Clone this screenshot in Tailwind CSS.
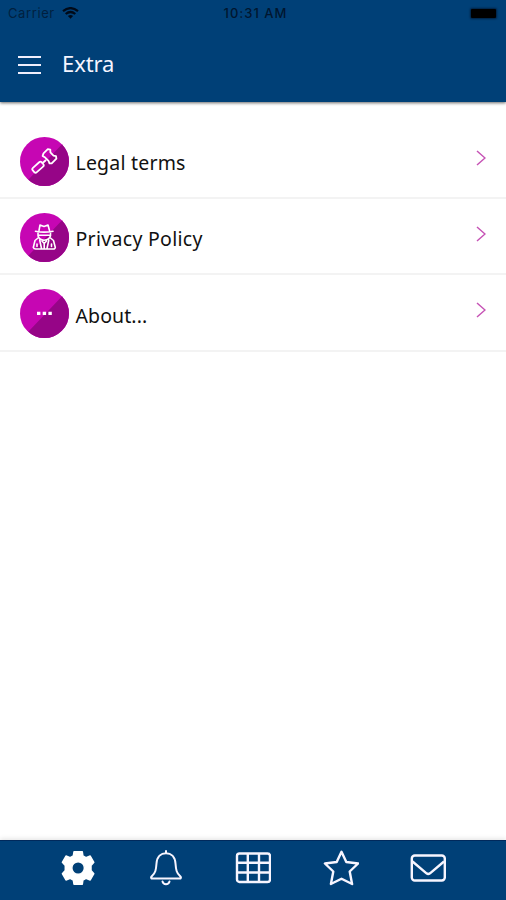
<!DOCTYPE html>
<html lang="en">
<head>
<meta charset="utf-8">
<title>Extra</title>
<script src="https://cdn.jsdelivr.net/npm/@tailwindcss/browser@4"></script>
</head>
<body class="bg-white">
<div class="w-[506px] h-[900px] flex flex-col overflow-hidden bg-white font-['Noto_Sans',sans-serif]">
  <header class="h-[102px] shrink-0 bg-[#004077] shadow-[0_1px_3px_rgba(0,0,0,0.6)]">
    <div class="h-[26px] grid grid-cols-3 items-center pl-2 pr-2.5 text-[13px] leading-[26px] font-['Inter',sans-serif]">
      <div class="flex items-center gap-[7px] text-[#00203f]">
        <span class="tracking-[0.6px]">Carrier</span>
        <svg class="w-[17px] h-3" viewBox="0 0 17 12" fill="none" stroke="#000a18" stroke-width="2.2"><path d="M1 4.2Q8.500-2 16 4.200M3.700 7Q8.500 3 13.300 7"/><path d="M8.500 11.800L5.900 9.100Q8.500 7.100 11.100 9.100Z" fill="#000a18" stroke="none"/></svg>
      </div>
      <div class="text-center text-[#00162f] font-medium tracking-[1px] pl-[7px] whitespace-nowrap">10:31 AM</div>
      <div class="justify-self-end w-[25px] h-[9px] bg-black rounded-[1px] shadow-[0_0_2px_1px_rgba(0,10,30,0.6)]"></div>
    </div>
    <div class="h-[76px] flex items-center pl-[18px] gap-[21px]">
      <svg class="w-[23px] h-[18px] mt-px" viewBox="0 0 23 18" stroke="#f0eefc" stroke-width="2"><path d="M0 1H23M0 9H23M0 17H23"/></svg>
      <h1 class="text-[22px] leading-[30px] text-[#f6f5ff] -mt-0.5 tracking-[-0.1px]">Extra</h1>
    </div>
  </header>
  <main class="flex-1 pt-[21px]">
    <ul class="text-[19.5px] text-[#111]">
      <li class="h-[76px] border-b-2 border-[#f3f3f3] flex items-center pl-5 pr-[20px]">
        <svg class="w-[49px] h-[49px] mt-0.5" viewBox="0 0 49 49"><defs><clipPath id="disc"><circle cx="24.500" cy="24.500" r="24.500"/></clipPath></defs><g clip-path="url(#disc)"><path d="M0 0H49V49H0Z" fill="#c606b3"/><path d="M49 0V49H0V49L9 42Z" fill="#960587"/></g>
          <g fill="none" stroke="#fff" stroke-width="1.800" stroke-linejoin="round" stroke-linecap="round"><rect x="-6" y="-2.900" width="12" height="5.800" rx="1.800" transform="translate(18 30.200) rotate(-42)"/><path d="M22.600 26L25.500 23.500M22.600 19L23.500 16.400L27.800 12.200L30.300 12.600L30.400 15.400L33.500 18.600L36 19.100L36.400 21.600L31.700 26.300L29.500 26.400L28.500 23.800L25.200 20.600Z"/></g></svg>
        <span class="flex-1 pl-[6.500px] pt-1.5 tracking-[0.2px]">Legal terms</span>
        <svg class="w-[10px] h-4 -mt-1" viewBox="0 0 10 16" fill="none" stroke="#c653b5" stroke-width="1.500"><path d="M1 1L9 8L1 15"/></svg>
      </li>
      <li class="h-[76px] border-b-2 border-[#f3f3f3] flex items-center pl-5 pr-[20px]">
        <svg class="w-[49px] h-[49px] mt-0.5" viewBox="0 0 49 49"><g clip-path="url(#disc)"><path d="M0 0H49V49H0Z" fill="#c606b3"/><path d="M49 0V49H0V49L9 42Z" fill="#960587"/></g>
          <g fill="none" stroke="#fff" stroke-width="1.600" stroke-linejoin="round" stroke-linecap="round"><path d="M19 17.500L20 12L24 13.500L28 12L29.500 17.500M15.500 18.200Q24 20 33 18.200M18 19V22.700Q19 26.800 24 27.200Q29.500 26.800 30.500 22.700V19M18.500 22.200H30M18 25L15 27.500L13.300 34.500Q14 36.200 16 36H32.500Q35.200 36.200 35.300 34.500L33.500 27.500L30.500 25M19.700 27L21.500 35.500M28.800 27L27 35.500M22 28L24.200 30.500L26.500 28M24.200 30.500V35.500M17 31V33.500M31.500 31V33.500"/></g></svg>
        <span class="flex-1 pl-[6.500px] pt-1.5 tracking-[0.3px]">Privacy Policy</span>
        <svg class="w-[10px] h-4 -mt-1" viewBox="0 0 10 16" fill="none" stroke="#c653b5" stroke-width="1.500"><path d="M1 1L9 8L1 15"/></svg>
      </li>
      <li class="h-[77px] border-b-2 border-[#f3f3f3] flex items-center pl-5 pr-[20px]">
        <svg class="w-[49px] h-[49px] mt-0.5" viewBox="0 0 49 49"><g clip-path="url(#disc)"><path d="M0 0H49V49H0Z" fill="#c606b3"/><path d="M49 0V49H0V49L9 42Z" fill="#960587"/></g><path fill="#fff" d="M17 22.700h3.400v3.400H17zM22.700 22.700h3.400v3.400h-3.400zM28.400 22.700h3.400v3.400h-3.400z"/></svg>
        <span class="flex-1 pl-[6.500px] pt-1.5 tracking-[0.1px]">About...</span>
        <svg class="w-[10px] h-4 -mt-1.5" viewBox="0 0 10 16" fill="none" stroke="#c653b5" stroke-width="1.500"><path d="M1 1L9 8L1 15"/></svg>
      </li>
    </ul>
  </main>
  <nav class="h-[60px] shrink-0 bg-[#004077] border-t border-[#00295c] shadow-[0_-1px_5px_rgba(0,0,0,0.12)] flex justify-between pl-[60px] pr-[60px] pt-[9px] text-[#f7f5ff]">
    <svg class="w-9 h-9" viewBox="0 0 36 36"><path fill="#fff" fill-rule="evenodd" stroke="#fff" stroke-width="1.500" stroke-linejoin="round" d="M14 1.800H22.300L22.900 6L26 7.600L30.200 6L33.800 12.300L31 15.500V20.500L33.800 23.700L30.200 30L26 28.400L22.900 30L22.300 34.200H14L13.300 30L10.200 28.400L6 30L2.400 23.700L5.300 20.500V15.500L2.400 12.300L6 6L10.200 7.600L13.300 6ZM18.100 11.700A6.300 6.300 0 1 0 18.100 24.300A6.300 6.300 0 1 0 18.100 11.700Z"/></svg>
    <svg class="w-9 h-9" viewBox="0 0 36 36" fill="none" stroke="currentColor" stroke-width="2" stroke-linecap="round" stroke-linejoin="round"><path d="M18 1V3M3.500 28.500H32.500Q33.500 27.500 32 26C28.500 23 28 20 27.500 13.500C27 6.500 23 3.200 18 3.200S9 6.500 8.500 13.500C8 20 7.500 23 4 26Q2.500 27.500 3.500 28.500ZM14.500 31.500Q15.200 34.200 18 34.200T21.500 31.500"/></svg>
    <svg class="w-9 h-9" viewBox="0 0 36 36" fill="none" stroke="currentColor" stroke-width="2.400"><rect x="2" y="3.500" width="33" height="28.500" rx="2.500"/><path d="M12.800 3.500V32M24 3.500V32M2 12.700H35M2 22.500H35"/></svg>
    <svg class="w-9 h-9" viewBox="0 0 36 36" fill="none" stroke="currentColor" stroke-width="2.400" stroke-linejoin="round"><path d="M18.500 1.800L23.300 12L35.100 13.500L26.700 21.500L29.100 34L18.500 28.700L7.900 34L10.300 21.500L1.900 13.500L13.700 12Z"/></svg>
    <svg class="w-9 h-9" viewBox="0 0 36 36" fill="none" stroke="currentColor" stroke-width="2.400" stroke-linejoin="round"><rect x="1.800" y="5.500" width="33" height="25" rx="3"/><path d="M2.500 11.500L16.500 23.300Q18.200 24.600 20 23.300L34 11.500"/></svg>
  </nav>
</div>
</body>
</html>
